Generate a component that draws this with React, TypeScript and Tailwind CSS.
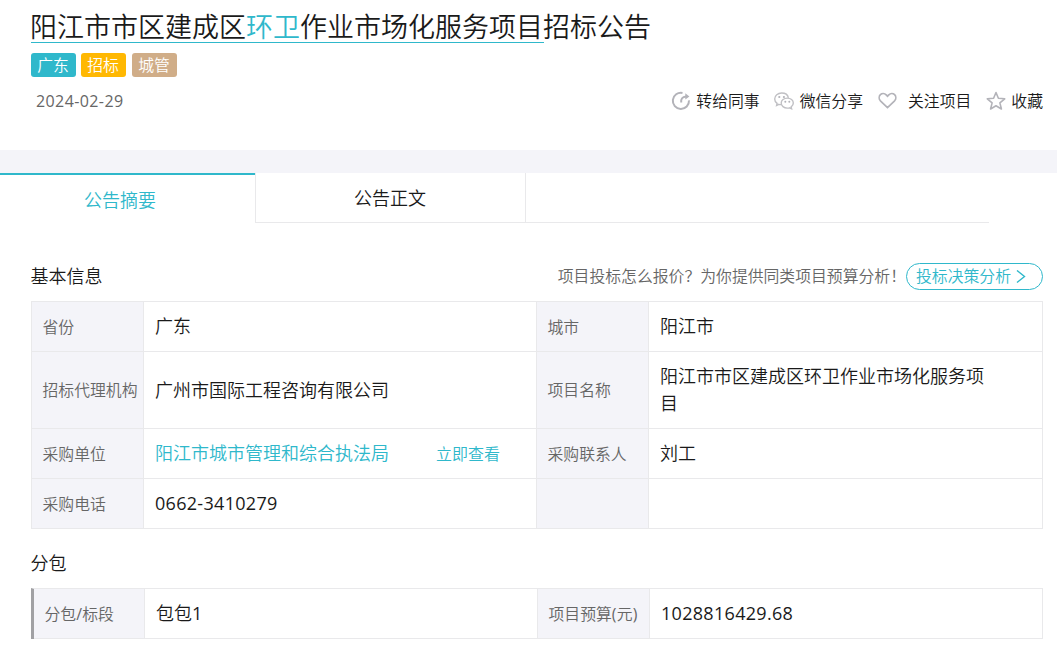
import type { ReactNode } from "react";

type Field = { label: ReactNode; value: ReactNode };

const tags = [
  { text: "广东", className: "bg-[#2fb8cb] mr-[5px]" },
  { text: "招标", className: "bg-[#ffb802] mr-[6px]" },
  { text: "城管", className: "bg-[#d0ad88]" },
];

const basicRows: [Field, Field][] = [
  [
    { label: "省份", value: "广东" },
    { label: "城市", value: "阳江市" },
  ],
  [
    { label: "招标代理机构", value: "广州市国际工程咨询有限公司" },
    { label: "项目名称", value: "阳江市市区建成区环卫作业市场化服务项目" },
  ],
  [
    {
      label: "采购单位",
      value: (
        <span className="whitespace-nowrap text-[#2fb8cb]">
          阳江市城市管理和综合执法局
          <a className="ml-[47px] text-base leading-none">立即查看</a>
        </span>
      ),
    },
    { label: "采购联系人", value: "刘工" },
  ],
  [
    { label: "采购电话", value: <Num>0662-3410279</Num> },
    { label: "", value: "" },
  ],
];

const rowHeights = ["h-[50px]", "h-[77px]", "h-[50px]", "h-[50px]"];

function Num({ children }: { children: ReactNode }) {
  return <span className="font-normal tracking-[0.3px]">{children}</span>;
}

function ForwardIcon() {
  return (
    <svg width="20" height="20" viewBox="0 0 20 20" fill="none" stroke="#b3b3b9" strokeWidth="2">
      <path d="M11.5 1.9A8.1 8.1 0 1 0 18 9.4" />
      <path d="M10.2 11.5C9.8 8 11.3 5.7 15 5.5" />
      <path d="M14.3 2.3L18.4 5.4L14.3 8.5Z" fill="#b3b3b9" stroke="none" />
    </svg>
  );
}

function WechatIcon() {
  return (
    <svg width="20" height="18" viewBox="0 0 20 18" fill="none" stroke="#c0c0c4" strokeWidth="1.4">
      <path d="M7 12.6C6.2 12.6 5.5 12.5 4.9 12.3L2.6 13.5L3.1 11.4C1.6 10.3.7 8.7.7 6.9C.7 3.6 3.8 1 7.6 1C11.1 1 13.9 3.1 14.4 5.9" />
      <path d="M13.3 6.1C16.7 6.1 19.3 8.3 19.3 11.1C19.3 12.6 18.5 14 17.2 14.9L17.6 16.8L15.6 15.8C14.9 16 14.1 16.1 13.3 16.1C9.9 16.1 7.2 13.9 7.2 11.1C7.2 8.3 9.9 6.1 13.3 6.1Z" />
      <g fill="#b3b3b9" stroke="none">
        <circle cx="5.3" cy="5" r="1.1" />
        <circle cx="9.9" cy="5" r="1.1" />
        <circle cx="11.3" cy="9.8" r="1" />
        <circle cx="15.3" cy="9.8" r="1" />
      </g>
    </svg>
  );
}

function HeartIcon() {
  return (
    <svg width="20" height="18" viewBox="0 0 20 18" fill="none" stroke="#b3b3b9" strokeWidth="1.7">
      <path d="M9.5 15.6L2.4 8.8C.8 7 .8 4.3 2.4 2.7C4 1.1 6.5 1.1 8.2 2.8L9.5 4.2L10.8 2.8C12.5 1.1 15 1.1 16.6 2.7C18.2 4.3 18.2 7 16.6 8.8Z" />
    </svg>
  );
}

function StarIcon() {
  return (
    <svg width="20" height="20" viewBox="0 0 20 20" fill="none" stroke="#b3b3b9" strokeWidth="1.6" strokeLinejoin="round">
      <path d="M10 1.5L12.4 7.2L18.7 7.8L13.9 11.9L15.4 18L10 14.8L4.6 18L6.1 11.9L1.3 7.8L7.6 7.2Z" />
    </svg>
  );
}

function FieldRow({ fields, className }: { fields: Field[]; className: string }) {
  return (
    <div className={`grid border-b border-[#e9e9eb] ${className}`}>
      {fields.map((field, i) => (
        <div key={i} className="contents">
          <div className="flex items-center whitespace-nowrap border-r border-[#e9e9eb] bg-[#f4f4f9] pl-[10.5px] pt-[2px] text-[15.84px] text-[#666]">
            {field.label}
          </div>
          <div className="flex items-center border-r border-[#e9e9eb] pl-[11px] pr-[48px] text-lg leading-[27px]">
            <div>{field.value}</div>
          </div>
        </div>
      ))}
    </div>
  );
}

export default function App() {
  return (
    <div className="h-[650px] w-[1057px] overflow-hidden bg-white font-['Open_Sans','Noto_Sans_CJK_SC',sans-serif] font-[350] text-[#1a1a1a]">
      {/* 标题 */}
      <header className="h-[150px] pl-[31px] pr-[14px] pt-[11px]">
        <h1 className="flex h-8 text-[27px] leading-8">
          <span className="h-8 border-b border-[#2fb8cb]">
            <span className="-ml-px mr-px">
              阳江市市区建成区<span className="text-[#2fb8cb]">环卫</span>作业市场化服务项目
            </span>
          </span>
          <span className="-ml-px">招标公告</span>
        </h1>
        <div className="mt-[10px] flex">
          {tags.map((tag) => (
            <span
              key={tag.text}
              className={`h-6 w-[45px] rounded-[3px] pr-px text-center text-[15.84px] leading-6 text-white ${tag.className}`}
            >
              {tag.text}
            </span>
          ))}
        </div>
        <div className="mt-3 flex h-6 items-center text-[15.84px]">
          <span className="ml-[5px] mr-auto text-base font-normal tracking-[0.4px] text-[#666]">2024-02-29</span>
          <span className="flex items-center gap-[5px]"><ForwardIcon /><span className="pt-px">转给同事</span></span>
          <span className="ml-[14px] flex items-center gap-[6px]"><WechatIcon /><span className="pt-px">微信分享</span></span>
          <span className="ml-[15px] flex items-center gap-[10px]"><HeartIcon /><span className="pt-px">关注项目</span></span>
          <span className="ml-[15px] flex items-center gap-[5px]"><StarIcon /><span className="pt-px">收藏</span></span>
        </div>
      </header>

      <div className="h-[23px] bg-[#f4f4f9]" />

      {/* 标签页 */}
      <nav className="flex h-[50px] w-[989px] text-lg">
        <div className="w-[255px] border-t-2 border-[#2fb8cb] pr-[15px] text-center leading-[50px] text-[#2fb8cb]">
          公告摘要
        </div>
        <div className="w-[271px] border-x border-b border-[#e9e9eb] pr-px text-center leading-[50px]">公告正文</div>
        <div className="flex-1 border-b border-[#e9e9eb]" />
      </nav>

      <main className="pl-[31px] pr-[14px]">
        {/* 基本信息 */}
        <div className="flex h-[78px] items-end pb-[11px]">
          <h2 className="-ml-[0.5px] mr-auto text-lg leading-[27px]">基本信息</h2>
          <span className="whitespace-nowrap text-[15.84px] leading-[27px] text-[#666]">
            项目投标怎么报价？为你提供同类项目预算分析！
          </span>
          <a className="flex h-[27px] w-[137px] items-center rounded-full border border-[#2fb8cb] pl-[9px] text-[15.84px] text-[#2fb8cb]">
            <span className="pt-px">投标决策分析</span>
            <svg className="ml-[5px]" width="10" height="14" viewBox="0 0 10 14" fill="none" stroke="#2fb8cb" strokeWidth="1.4">
              <path d="M1 .5L8.5 6.5L1 12.5" />
            </svg>
          </a>
        </div>
        <div className="border-l border-t border-[#e9e9eb]">
          {basicRows.map((fields, i) => (
            <FieldRow
              key={i}
              fields={fields}
              className={`grid-cols-[112px_393px_112px_1fr] ${rowHeights[i]}`}
            />
          ))}
        </div>

        {/* 分包 */}
        <h2 className="-ml-[0.5px] pb-[11px] pt-[21px] text-lg leading-[27px]">分包</h2>
        <div className="border-l-[3px] border-l-[#a1a1a4] border-t border-t-[#e9e9eb]">
          <FieldRow
            fields={[
              { label: <span>分包<Num>/</Num>标段</span>, value: <span>包包<Num>1</Num></span> },
              { label: <span>项目预算<Num>(</Num>元<Num>)</Num></span>, value: <Num>1028816429.68</Num> },
            ]}
            className="h-[50px] grid-cols-[111px_393px_112px_1fr]"
          />
        </div>
      </main>
    </div>
  );
}
